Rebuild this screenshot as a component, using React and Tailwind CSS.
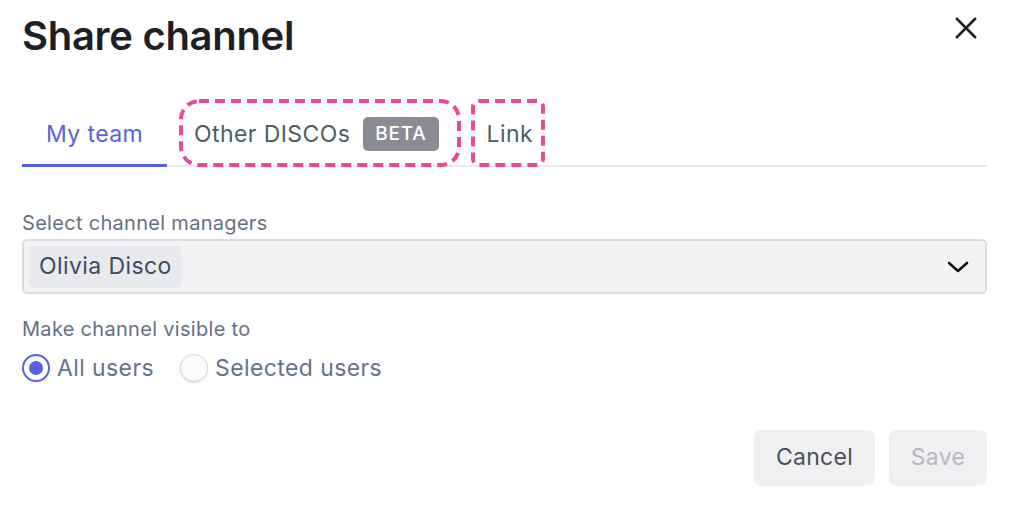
import { useState } from "react";

const DashedBox = ({ w, h, rx, className }) => (
  <svg
    className={`absolute pointer-events-none ${className}`}
    width={w}
    height={h}
    viewBox={`0 0 ${w} ${h}`}
    fill="none"
  >
    <rect
      x="2"
      y="2"
      width={w - 4}
      height={h - 4}
      rx={rx}
      stroke="#ec4899"
      strokeWidth="4"
      strokeDasharray="10 6"
    />
  </svg>
);

const Tab = ({ active, children, className = "" }) => (
  <div
    className={`relative flex items-center h-[67px] pl-[24px] pt-[4px] text-[23px] tracking-[0.4px] ${
      active
        ? "text-[#5a5fe8] border-b-[3px] border-[#5a5fe8]"
        : "text-[#4a5f5f] border-b-[3px] border-transparent"
    } ${className}`}
  >
    {children}
  </div>
);

const Radio = ({ checked, label, onClick }) => (
  <label className="flex items-center gap-[7px] cursor-pointer" onClick={onClick}>
    <span
      className={`w-[28px] h-[28px] rounded-full flex items-center justify-center ${
        checked
          ? "border-[2px] border-[#5a5fe8]"
          : "border-[1.5px] border-[#d4d7dd] shadow-[0_1px_2px_rgba(0,0,0,0.12)] bg-[#fbfbfc]"
      }`}
    >
      {checked && <span className="w-[14px] h-[14px] rounded-full bg-[#5a5fe8]"></span>}
    </span>
    {label}
  </label>
);

const App = () => {
  const [visibleTo, setVisibleTo] = useState("all");

  return (
    <div
      className="w-[1018px] h-[517px] bg-white pl-[22px] pr-[31px] pt-[10px]"
      style={{ fontFamily: "Inter, 'Noto Sans', sans-serif" }}
    >
      {/* header */}
      <div className="flex items-start justify-between h-[90px]">
        <h1 className="text-[40px] font-semibold tracking-[-0.3px] text-[#1d1f24] leading-[52px]">
          Share channel
        </h1>
        <button className="mt-[5px] mr-[8px] text-[#1f2026]">
          <svg width="26" height="26" viewBox="0 0 24 24" fill="none">
            <path
              d="M3.5 3.5L20.5 20.5M20.5 3.5L3.5 20.5"
              stroke="currentColor"
              strokeWidth="2.4"
              strokeLinecap="round"
            />
          </svg>
        </button>
      </div>

      {/* tabs */}
      <div className="flex gap-[3px] border-b-[2px] border-[#ebebeb] h-[67px]">
        <Tab active className="pr-[24px]">
          My team
        </Tab>
        <Tab className="pr-[21px]">
          Other DISCOs
          <span className="ml-[13px] bg-[#8b8b95] text-white text-[19px] font-medium tracking-[0.8px] rounded-[5px] px-[12px] h-[34px] flex items-center">
            BETA
          </span>
          <DashedBox w={282} h={68} rx={18} className="left-[9px] top-[-1px]" />
        </Tab>
        <Tab className="pr-[24px]">
          Link
          <DashedBox w={74} h={68} rx={6} className="left-[8px] top-[-1px]" />
        </Tab>
      </div>

      {/* channel managers */}
      <div className="mt-[44px] text-[20px] tracking-[0.3px] text-[#657085] leading-[24px]">
        Select channel managers
      </div>
      <div className="mt-[4px] h-[55px] flex items-center justify-between bg-[#f3f4f6] border-[2px] border-[#dcdcdc] rounded-[5px] pl-[5px] pr-[16px]">
        <span className="h-[42px] flex items-center px-[10px] bg-[#e8eaee] rounded-[5px] text-[23px] tracking-[0.4px] text-[#3d4b63]">
          Olivia Disco
        </span>
        <svg width="22" height="14" viewBox="0 0 22 14" fill="none">
          <path
            d="M2 3L11 11L20 3"
            stroke="#111"
            strokeWidth="2.6"
            strokeLinecap="round"
            strokeLinejoin="round"
          />
        </svg>
      </div>

      {/* visibility */}
      <div className="mt-[23px] text-[20px] tracking-[0.3px] text-[#657085] leading-[24px]">
        Make channel visible to
      </div>
      <div className="mt-[10px] flex items-center gap-[26px] text-[23px] tracking-[0.4px] text-[#66728a]">
        <Radio
          checked={visibleTo === "all"}
          label="All users"
          onClick={() => setVisibleTo("all")}
        />
        <Radio
          checked={visibleTo === "selected"}
          label="Selected users"
          onClick={() => setVisibleTo("selected")}
        />
      </div>

      {/* footer */}
      <div className="mt-[44px] flex justify-end gap-[14px]">
        <button className="h-[56px] w-[121px] bg-[#f0f0f2] rounded-[7px] text-[23px] tracking-[0.3px] text-[#4b5058]">
          Cancel
        </button>
        <button
          disabled
          className="h-[56px] w-[98px] bg-[#f0f0f2] rounded-[7px] text-[23px] tracking-[0.3px] text-[#b3b8c4]"
        >
          Save
        </button>
      </div>
    </div>
  );
};

export default App;
